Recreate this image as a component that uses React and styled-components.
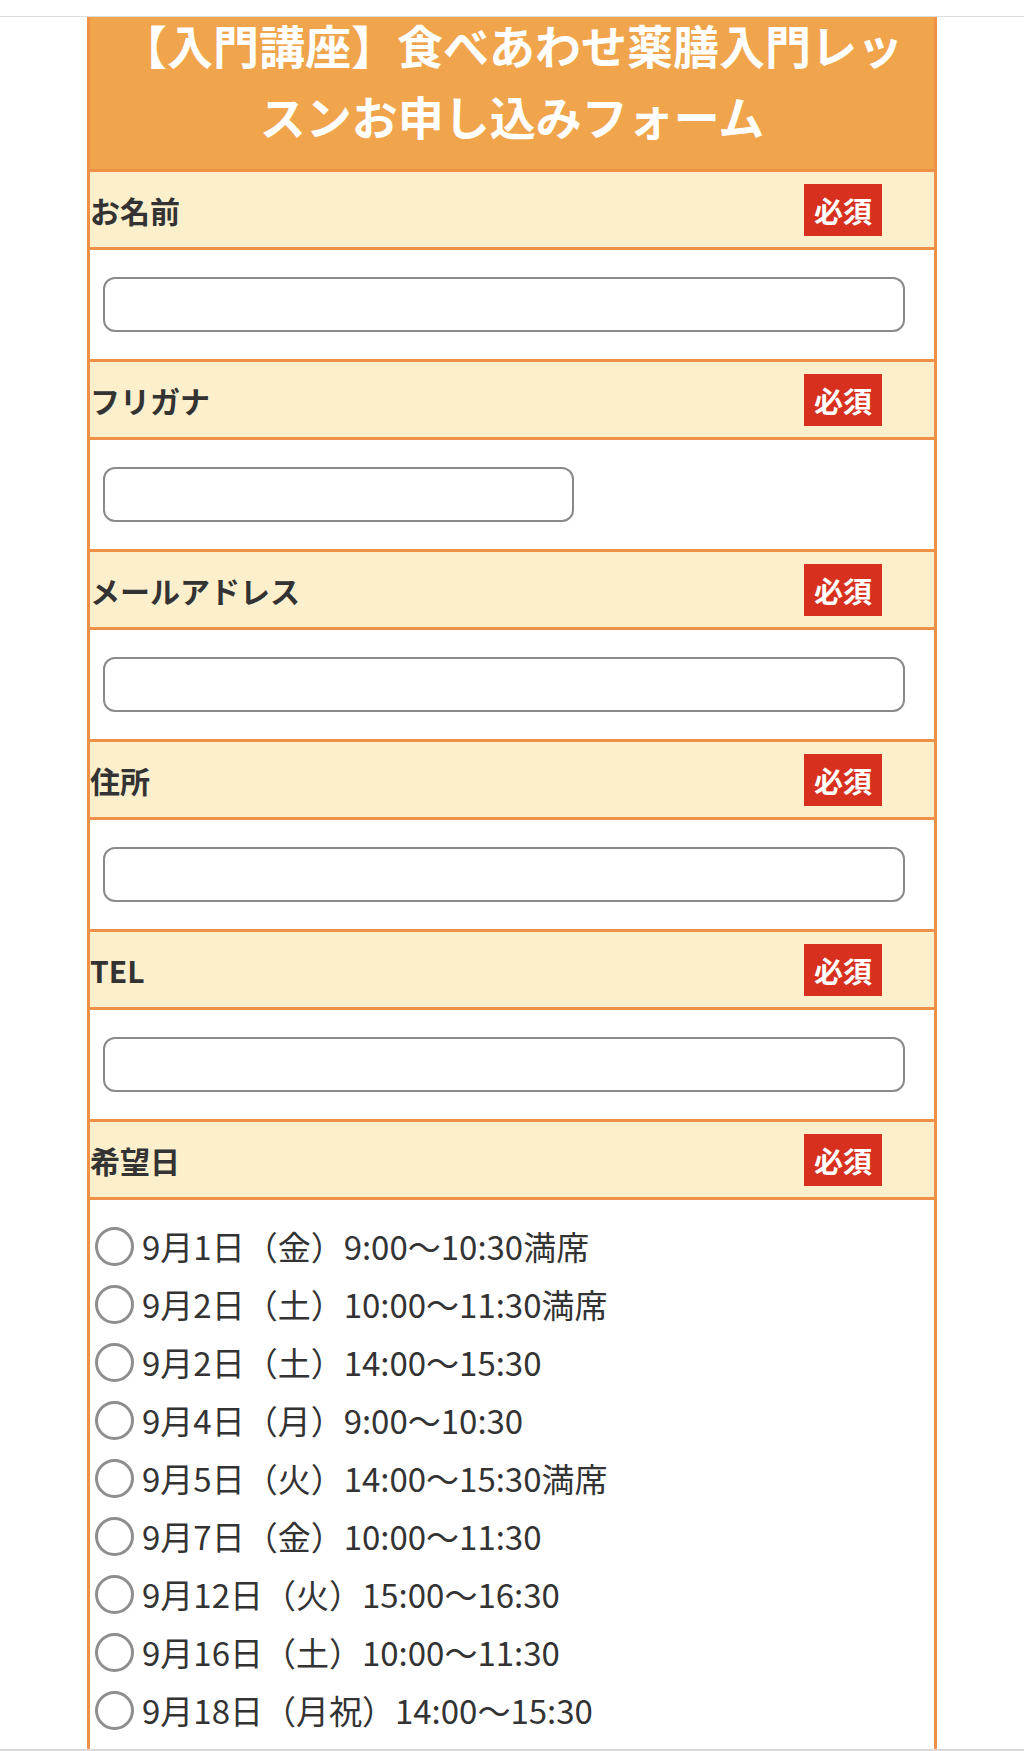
import React from "react";
import styled, { createGlobalStyle } from "styled-components";

const GlobalStyle = createGlobalStyle`
  body {
    margin: 0;
    background: #ffffff;
    font-family: "Noto Sans CJK JP", "Noto Sans", sans-serif;
    color: #333333;
  }
`;

const TopBar = styled.div`
  height: 16px;
  background: #ffffff;
  border-bottom: 1px solid #dedede;
`;

const BottomBar = styled.div`
  position: fixed;
  left: 0;
  right: 0;
  bottom: 0;
  height: 2px;
  background: #d9d9d9;
`;

const Form = styled.form`
  width: 850px;
  margin: 0 auto;
  box-sizing: border-box;
  border-left: 3px solid #ee9148;
  border-right: 3px solid #ee9148;
  background: #ffffff;
`;

const Header = styled.div`
  background: #f0a54c;
  padding: 0 20px 14px;
  height: 152px;
  box-sizing: border-box;
  overflow: hidden;
`;

const Title = styled.h1`
  margin: -8px 0 0;
  font-size: 46px;
  line-height: 71px;
  font-weight: 700;
  color: #ffffff;
  text-align: center;
`;

const LabelRow = styled.div`
  display: flex;
  align-items: center;
  justify-content: space-between;
  height: 75px;
  background: #fcefcb;
  border-top: 3px solid #ee9148;
`;

const LabelText = styled.span`
  font-size: 30px;
  font-weight: 700;
  color: #333333;
`;

const Required = styled.span`
  display: flex;
  align-items: center;
  justify-content: center;
  width: 78px;
  height: 52px;
  margin-right: 52px;
  background: #d8301e;
  color: #ffffff;
  font-size: 29px;
  font-weight: 700;
`;

const InputRow = styled.div`
  display: flex;
  align-items: center;
  height: 109px;
  border-top: 3px solid #ee9148;
`;

const TextInput = styled.input`
  box-sizing: border-box;
  width: ${(p) => (p.$short ? "471px" : "802px")};
  height: 55px;
  margin-left: 13px;
  border: 2px solid #8a8a8a;
  border-radius: 12px;
  background: #ffffff;
  font-size: 28px;
  padding: 0 12px;
  outline: none;
`;

const DateList = styled.div`
  border-top: 3px solid #ee9148;
  padding: 17px 0 20px;
`;

const DateOption = styled.label`
  display: flex;
  align-items: center;
  height: 58px;
  font-size: 33px;
  color: #333333;
  cursor: pointer;
`;

const Radio = styled.input`
  appearance: none;
  box-sizing: border-box;
  width: 39px;
  height: 39px;
  margin: 0 8px 0 5px;
  border: 3px solid #8e8e8e;
  border-radius: 50%;
  background: #ffffff;
  flex-shrink: 0;
`;

const fields = [
  { label: "お名前", type: "text" },
  { label: "フリガナ", type: "text", short: true },
  { label: "メールアドレス", type: "email" },
  { label: "住所", type: "text" },
  { label: "TEL", type: "tel" },
];

const dates = [
  "9月1日（金）9:00～10:30満席",
  "9月2日（土）10:00～11:30満席",
  "9月2日（土）14:00～15:30",
  "9月4日（月）9:00～10:30",
  "9月5日（火）14:00～15:30満席",
  "9月7日（金）10:00～11:30",
  "9月12日（火）15:00～16:30",
  "9月16日（土）10:00～11:30",
  "9月18日（月祝）14:00～15:30",
  "9月19日（火）10:00～11:30",
];

const App = () => {
  return (
    <>
      <GlobalStyle />
      <TopBar />
      <Form>
        <Header>
          <Title>【入門講座】食べあわせ薬膳入門レッスンお申し込みフォーム</Title>
        </Header>
        {fields.map((f) => (
          <React.Fragment key={f.label}>
            <LabelRow>
              <LabelText>{f.label}</LabelText>
              <Required>必須</Required>
            </LabelRow>
            <InputRow>
              <TextInput type={f.type} $short={f.short} />
            </InputRow>
          </React.Fragment>
        ))}
        <LabelRow>
          <LabelText>希望日</LabelText>
          <Required>必須</Required>
        </LabelRow>
        <DateList>
          {dates.map((d) => (
            <DateOption key={d}>
              <Radio type="radio" name="date" value={d} />
              {d}
            </DateOption>
          ))}
        </DateList>
      </Form>
      <BottomBar />
    </>
  );
};

export default App;
